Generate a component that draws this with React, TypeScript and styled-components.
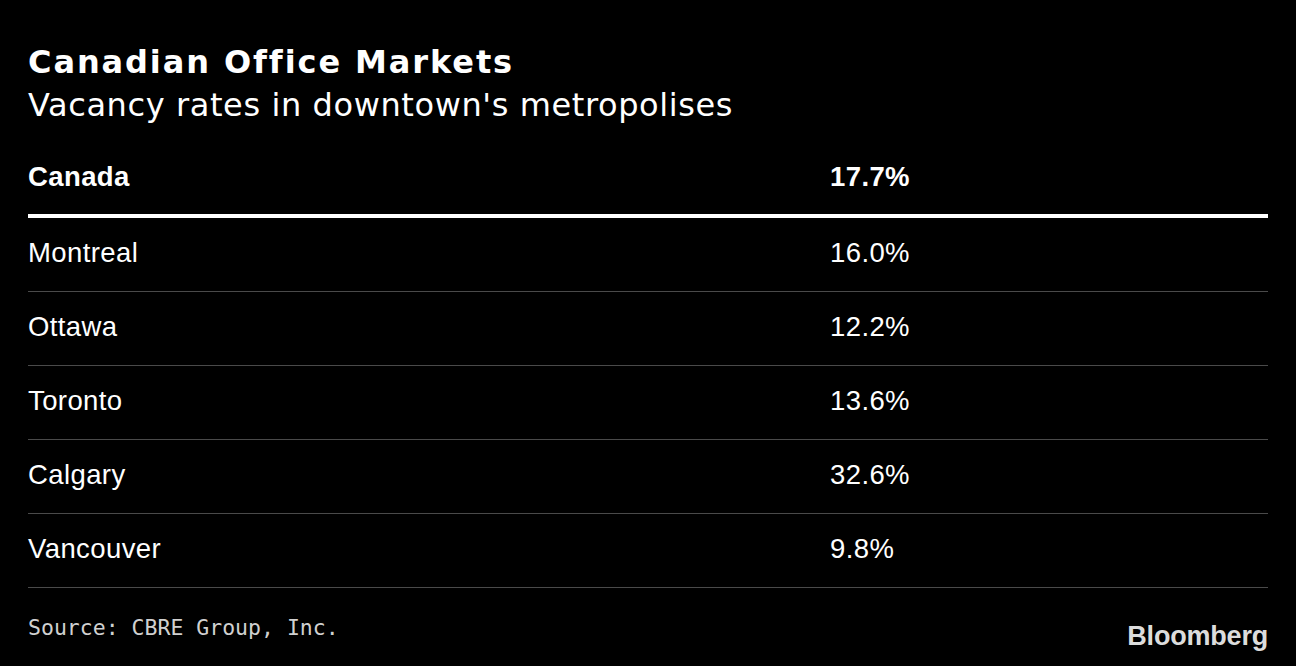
import React from "react";
import styled, { createGlobalStyle } from "styled-components";

const Global = createGlobalStyle`
  html, body { margin: 0; padding: 0; background: #000; }
  body { width: 1296px; height: 666px; overflow: hidden; }
`;

const Page = styled.div`
  width: 1296px;
  height: 666px;
  box-sizing: border-box;
  padding: 41px 28px 0 28px;
  background: #000;
  color: #fff;
  display: flex;
  flex-direction: column;
`;

const Title = styled.h1`
  margin: 0;
  font-family: "DejaVu Sans", Verdana, sans-serif;
  font-weight: bold;
  font-size: 32px;
  line-height: 42px;
  letter-spacing: 1.9px;
  color: #fff;
`;

const Subtitle = styled.h2`
  margin: 0;
  font-family: "DejaVu Sans", Verdana, sans-serif;
  font-weight: normal;
  font-size: 32px;
  line-height: 44px;
  letter-spacing: 0.6px;
  color: #fff;
`;

const Table = styled.div`
  margin-top: 13px;
  display: flex;
  flex-direction: column;
  font-family: "Liberation Sans", Arial, sans-serif;
`;

const Row = styled.div<{ $head?: boolean }>`
  display: grid;
  grid-template-columns: 802px 1fr;
  align-items: center;
  box-sizing: border-box;
  height: ${(p) => (p.$head ? "78px" : "74px")};
  padding-bottom: ${(p) => (p.$head ? "0" : "3px")};
  border-bottom: ${(p) => (p.$head ? "4px solid #fff" : "1px solid #4a4a4a")};
  font-size: 27.5px;
  font-weight: ${(p) => (p.$head ? "bold" : "normal")};
  letter-spacing: 0.4px;
  color: #fff;
`;

const Footer = styled.div`
  display: flex;
  justify-content: space-between;
  align-items: baseline;
  margin-top: 23px;
`;

const Source = styled.div`
  font-family: "DejaVu Sans Mono", monospace;
  font-size: 21.5px;
  color: #d0d0d0;
`;

const Logo = styled.div`
  font-family: "Liberation Sans", Arial, sans-serif;
  font-weight: bold;
  font-size: 27px;
  letter-spacing: -0.2px;
  color: #dcdcdc;
  transform: translateY(10px);
`;

const rows: [string, string][] = [
  ["Montreal", "16.0%"],
  ["Ottawa", "12.2%"],
  ["Toronto", "13.6%"],
  ["Calgary", "32.6%"],
  ["Vancouver", "9.8%"],
];

export default function App() {
  return (
    <Page>
      <Global />
      <Title>Canadian Office Markets</Title>
      <Subtitle>Vacancy rates in downtown's metropolises</Subtitle>
      <Table>
        <Row $head>
          <span>Canada</span>
          <span>17.7%</span>
        </Row>
        {rows.map(([c, v]) => (
          <Row key={c}>
            <span>{c}</span>
            <span>{v}</span>
          </Row>
        ))}
      </Table>
      <Footer>
        <Source>Source: CBRE Group, Inc.</Source>
        <Logo>Bloomberg</Logo>
      </Footer>
    </Page>
  );
}
